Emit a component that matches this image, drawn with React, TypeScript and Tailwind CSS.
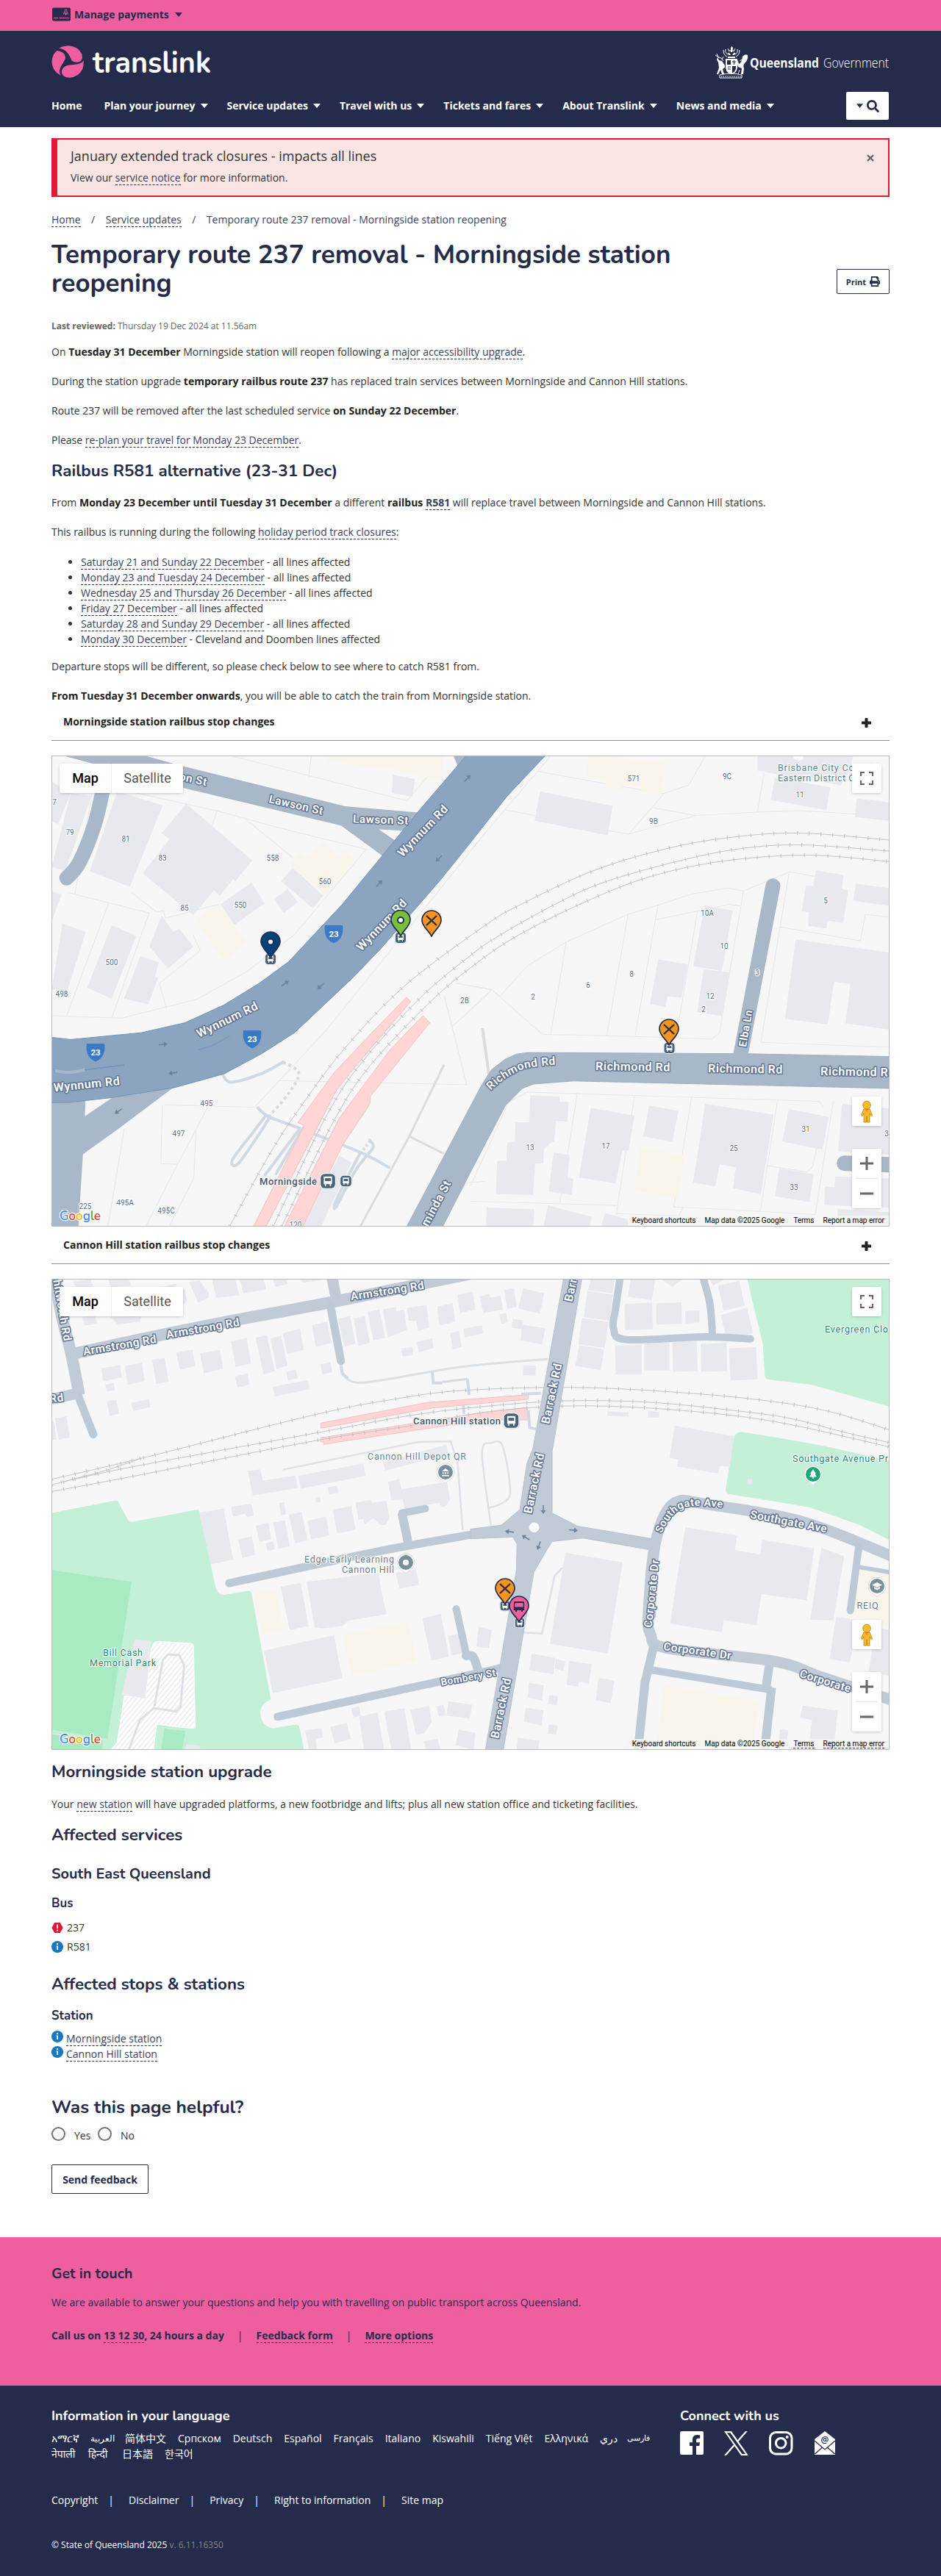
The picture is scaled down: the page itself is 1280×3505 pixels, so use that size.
import React from 'react';
import { FaPrint, FaSearch } from 'react-icons/fa';

type Pt = [number, number];

const NAVY = '#252b4b';
const HEAD = 'font-[Nunito,sans-serif] font-bold text-[#252b4b]';

/* ---------- shared bits ---------- */

const Caret = ({ className = '' }: { className?: string }) => (
  <svg className={className} width="10" height="6" viewBox="0 0 10 6" fill="currentColor">
    <path d="M0 0H10L5 6Z" />
  </svg>
);

const A = ({ children }: { children: React.ReactNode }) => (
  <a href="#" className="border-b border-dashed border-[#252b4b] text-[#3a4160]">
    {children}
  </a>
);

const B = ({ children }: { children: React.ReactNode }) => <strong className="font-bold text-[#222]">{children}</strong>;

const InfoIcon = () => (
  <svg width="16" height="16" viewBox="0 0 16 16">
    <circle cx="8" cy="8" r="8" fill="#1878c0" />
    <circle cx="8" cy="4.2" r="1.1" fill="#fff" />
    <path d="M6.6 6.4H8.9V12H7.2V7.6H6.6Z" fill="#fff" />
  </svg>
);

const AlertIcon = () => (
  <svg width="16" height="14" viewBox="0 0 16 14">
    <path d="M4.2 0H11.8L15.6 7L11.8 14H4.2L.4 7Z" fill="#e31836" />
    <path d="M7 2.4H9L8.7 8.2H7.3Z" fill="#fff" />
    <circle cx="8" cy="10.6" r="1.1" fill="#fff" />
  </svg>
);

/* ---------- map drawing helpers ---------- */

const pts = (s: string): Pt[] =>
  s.trim().split(/\s+/).map((p) => p.split(',').map(Number) as Pt);

/** Smooth open curve through a list of points. */
function curve(s: string) {
  const p = pts(s);
  let d = `M${p[0][0]} ${p[0][1]}`;
  for (let i = 0; i < p.length - 1; i++) {
    const a = p[i - 1] ?? p[i];
    const b = p[i];
    const c = p[i + 1];
    const e = p[i + 2] ?? c;
    d += `C${b[0] + (c[0] - a[0]) / 6} ${b[1] + (c[1] - a[1]) / 6} ${c[0] - (e[0] - b[0]) / 6} ${c[1] - (e[1] - b[1]) / 6} ${c[0]} ${c[1]}`;
  }
  return d;
}

const Poly = ({ p, f = '#e8e9ef', s }: { p: string; f?: string; s?: string }) => (
  <polygon points={p} fill={f} stroke={s ?? 'none'} vectorEffect="non-scaling-stroke" strokeLinejoin="round" />
);

const Line = ({ p, c = '#e4e4e6', w = 1.3, dash, round }: { p: string; c?: string; w?: number; dash?: string; round?: boolean }) => (
  <path
    d={curve(p)}
    fill="none"
    stroke={c}
    strokeWidth={w}
    strokeDasharray={dash}
    strokeLinecap={round ? 'round' : 'butt'}
    strokeLinejoin="round"
    vectorEffect="non-scaling-stroke"
  />
);

const Seg = ({ p, c = '#e6e6e8', w = 1 }: { p: string; c?: string; w?: number }) => (
  <polyline points={p} fill="none" stroke={c} strokeWidth={w} vectorEffect="non-scaling-stroke" />
);

const Rail = ({ p }: { p: string }) => (
  <>
    <Line p={p} c="#c3c4c9" w={1} />
    <Line p={p} c="#c3c4c9" w={5} dash="1.2 14.8" />
  </>
);

const Ramp = ({ p, w = 4 }: { p: string; w?: number }) => <Line p={p} c="#d0dae4" w={w} round />;

const Road = ({ x, y, r = 0, t, size = 15.2 }: { x: number; y: number; r?: number; t: string; size?: number }) => (
  <text
    transform={`translate(${x} ${y}) rotate(${r})`}
    textAnchor="middle"
    dy=".36em"
    fontSize={size}
    fontWeight="600"
    letterSpacing=".55"
    fill="#fff"
    stroke="#5f7391"
    strokeWidth="3"
    strokeLinejoin="round"
    paintOrder="stroke"
  >
    {t}
  </text>
);

const Tag = ({ x, y, t, c = '#5c7089', size = 10, anchor = 'middle', w = 400, len }: { x: number; y: number; t: string; c?: string; size?: number; anchor?: 'start' | 'middle' | 'end'; w?: number; len?: number }) => (
  <text x={x} y={y} dy=".36em" textAnchor={anchor} fontSize={size} fontWeight={w} fill={c} stroke="#fff" strokeWidth="2.4" strokeLinejoin="round" paintOrder="stroke" textLength={len}>
    {t}
  </text>
);

const Arrow = ({ x, y, r }: { x: number; y: number; r: number }) => (
  <path transform={`translate(${x} ${y}) rotate(${r})`} d="M-6 -.8H1V-3.6L6 0L1 3.6V.8H-6Z" fill="#6d829b" />
);

const Shield = ({ x, y }: { x: number; y: number }) => (
  <g transform={`translate(${x} ${y})`}>
    <path d="M-12 -12H12C13.5 -2 11 8 0 12.500C-11 8 -13.500 -2 -12 -12Z" fill="#3a78c8" />
    <text textAnchor="middle" y="3.500" fontSize="11.500" fontWeight="700" fill="#fff">23</text>
  </g>
);

const Stop = ({ x, y, s = 1 }: { x: number; y: number; s?: number }) => (
  <g transform={`translate(${x} ${y}) scale(${s})`}>
    <rect x="-8" y="-8" width="16" height="16" rx="5" fill="#fff" stroke="#d5d9df" strokeWidth=".5" />
    <rect x="-7" y="-7" width="14" height="14" rx="4" fill="#48647a" />
    <path d="M-4 -4.500H4V3H3V5H1.800V3H-1.800V5H-3V3H-4Z" fill="#fff" />
    <path d="M-2.800 -2.800H2.800V0H-2.800Z" fill="#48647a" />
  </g>
);

const Pin = ({ x, y, f, kind }: { x: number; y: number; f: string; kind: 'dot' | 'cross' | 'bus' }) => (
  <g transform={`translate(${x} ${y})`} stroke={NAVY}>
    <path d="M0 0C-3.500 -8 -13 -13 -13 -22A13 13 0 0 1 13 -22C13 -13 3.500 -8 0 0Z" fill={f} strokeWidth="1.700" strokeLinejoin="round" />
    {kind === 'dot' && <circle cy="-21.500" r="4" fill="#fff" strokeWidth="2" />}
    {kind === 'cross' && <path d="M-7 -28L7 -15M7 -28L-7 -15" strokeWidth="2.300" fill="none" />}
    {kind === 'bus' && (
      <g fill={NAVY} stroke="none">
        <path d="M-6 -28H6C7 -28 7 -27 7.200 -25V-16H5V-14H3V-16H-3V-14H-5V-16H-7.200V-25C-7 -27 -7 -28 -6 -28Z" />
        <path d="M-5.500 -26H5.500L6 -20.500H-6Z" fill={f} />
      </g>
    )}
  </g>
);

const Poi = ({ x, y, f, children }: { x: number; y: number; f: string; children?: React.ReactNode }) => (
  <g transform={`translate(${x} ${y})`}>
    <path d="M0 15C-3 11 -12 9 -12 0A12 12 0 0 1 12 0C12 9 3 11 0 15Z" fill="#fff" stroke="#d0d4da" strokeWidth=".8" />
    <circle r="10" fill={f} />
    {children}
  </g>
);

/* ---------- map 1: Morningside ---------- */

function MorningsideMap() {
  return (
    <svg className="block h-full w-full font-[Roboto,sans-serif]" viewBox="0 0 1138 639">
      <rect width="1138" height="639" fill="#f7f7f7" />
      <g transform="translate(-11 -9) scale(.38265 .42092)">
        {/* parcel boundaries */}
        <Seg p="85,462 230,495 373,528 240,868" />
        <Seg p="230,495 80,860" />
        <Seg p="27,860 275,868 540,808 720,718 890,598 1145,322 845,255 615,198 230,120" />
        <Seg p="615,198 590,265" /><Seg p="710,220 885,350" />
        <Seg p="430,1148 748,1156 1000,910 1568,270" /><Seg p="830,1070 1502,1083 1450,895 1422,795" />
        <Seg p="435,837 410,755 555,650 530,600" /><Seg p="170,140 110,465" />
        <Seg p="308,460 400,525 425,520 430,545 620,500" /><Seg p="420,1148 415,1338 475,1340 585,1150" />
        <Seg p="285,1225 227,1540" /><Seg p="475,1340 362,1540" /><Seg p="540,1230 532,1385 445,1540" />
        <Seg p="665,20 1290,165 1360,90" /><Seg p="940,90 950,20" /><Seg p="1405,1540 1502,1400 1568,1395" />
        <Seg p="1450,895 1568,800 1590,775 1465,755" />
        {/* buildings */}
        <Poly p="260,135 422,180 305,443 162,393" />
        <Poly p="27,105 95,140 50,240 27,232" /><Poly p="95,140 168,150 75,393 27,378" />
        <Poly p="505,175 740,358 680,425 672,418 625,472 604,455 530,535 350,400 445,290 418,270" />
        <Poly p="737,430 784,497 677,566 627,500" />
        <Poly p="884,382 992,472 955,513 843,425" /><Poly p="866,450 901,493 852,528 817,483" />
        <Poly p="65,562 148,590 80,785 27,775" /><Poly p="240,568 328,602 240,805 153,770" />
        <Poly p="418,537 460,590 480,578 531,637 440,708 374,636" />
        <Poly p="342,667 408,688 395,733 405,738 370,824 284,805" /><Poly p="27,458 62,468 27,555" />
        <Poly p="1240,82 1318,95 1310,152 1236,140" />
        <Poly p="1050,1312 1092,1335 985,1540 920,1540" /><Poly p="1160,1145 1125,1195 1115,1185" />
        <Poly p="1010,20 1420,20 1408,97 1245,65 1008,38" f="#faf5ea" />
        <Poly p="990,298 1050,355 1066,325 1105,355 1000,470 875,370 910,338 940,352" f="#faf5ea" />
        <Poly p="622,502 718,625 636,680 540,550" f="#faf5ea" />
        {/* right side parcels */}
        <g transform="translate(1516 0)">
          <Seg p="240,70 478,110 685,142 775,115 835,20" /><Seg p="125,195 228,213" /><Seg p="285,20 0,325" />
          <Seg p="490,262 562,273 690,140" /><Seg p="562,273 800,213 650,188" />
          <Seg p="800,213 1020,202 1170,197 1366,208" /><Seg p="1020,202 1043,75" />
          <Seg p="0,840 75,776 105,797 200,700 340,622 560,532 666,503 785,467 915,447 970,457 1133,395 1225,410" />
          <Seg p="0,763 75,776 255,920 700,930 858,936 885,915 970,457" />
          <Seg p="340,622 285,920" /><Seg p="560,532 484,925" /><Seg p="666,503 585,925" />
          <Seg p="658,550 920,500 958,505" /><Seg p="807,520 740,880" />
          <Seg p="1133,395 1032,946 1488,962" /><Seg p="1100,573 1386,618 1403,532 1488,542" />
          <Seg p="0,1410 135,1140 200,1107 1240,1137 1253,1153" />
          <Seg p="380,1108 317,1465" /><Seg p="583,1118 518,1500 740,1507 755,1480" />
          <Seg p="786,1122 722,1478 980,1490 1225,1503" /><Seg p="1092,1130 1030,1490" /><Seg p="1290,1135 1225,1503" />
          <Seg p="0,1460 518,1473" /><Seg p="1055,1345 1195,1365 1215,1350 1230,1290" />
          <Poly p="247,135 505,182 488,277 228,230" />
          <Poly p="1020,20 1360,20 1350,60 1315,115 1020,68" /><Poly p="1082,90 1278,122 1265,195 1067,163" />
          <Poly p="1373,158 1488,170 1488,230 1366,218" />
          <Poly p="418,20 695,40 675,147 607,135 609,118 540,115 538,128 478,122 480,98 411,85" f="#faf5ea" />
          <Poly p="1228,390 1326,405 1320,450 1342,455 1325,560 1268,553 1265,578 1200,570 1203,525 1177,522 1192,440 1218,440" />
          <Poly p="1370,433 1488,448 1488,505 1360,488" />
          <Poly p="1155,614 1488,655 1488,905 1333,885 1350,757 1292,750 1270,888 1118,870" />
          <Poly p="832,503 932,520 893,715 791,700" /><Poly p="828,710 920,720 893,862 806,848" />
          <Poly p="667,678 773,695 750,802 700,797 693,832 638,822" />
          <Poly p="212,1117 316,1122 316,1137 349,1140 344,1203 304,1200 297,1268 285,1270 260,1293 258,1337 230,1338 222,1440 90,1436 95,1330 127,1328 130,1270 157,1268 160,1205 208,1205" />
          <Poly p="427,1158 582,1183 562,1297 540,1295 515,1402 385,1383" />
          <Poly p="635,1150 739,1168 717,1267 614,1250" />
          <Poly p="295,1302 352,1310 345,1383 365,1387 360,1440 278,1428" />
          <Poly p="604,1288 760,1310 737,1450 580,1424" f="#faf5ea" />
          <Poly p="834,1145 1077,1180 1032,1437 933,1418 943,1350 885,1340 870,1412 791,1400" />
          <Poly p="1131,1162 1273,1187 1251,1293 1108,1267" /><Poly p="1097,1353 1220,1372 1205,1463 1082,1443" />
          <Poly p="1320,1145 1488,1160 1488,1310 1307,1298" /><Poly p="1297,1380 1488,1385 1488,1480 1257,1472 1260,1412 1294,1415" />
          <Poly p="57,1480 228,1486 222,1540 55,1540" /><Poly p="275,1473 430,1510 425,1540 260,1540" /><Poly p="478,1498 565,1520 560,1540 465,1540" />
          <Poly p="1305,1485 1488,1495 1488,1540 1303,1540" />
        </g>
        {/* pedestrian paths */}
        <Ramp p="635,1050 665,1075 770,1048 850,1010" />
        <Line p="850,1010 905,1045 870,1110 800,1185" c="#d9d9db" w={4} dash="4 4" />
        <Ramp p="760,1158 800,1187 920,1228 1125,1302 1225,1350" />
        <Ramp p="785,1187 740,1240 670,1325 690,1338 770,1235 800,1190" />
        <Ramp p="905,1230 785,1375" /><Ramp p="930,1210 890,1270 825,1370" />
        <Ramp p="1158,1262 1170,1285 1140,1320 1100,1370 1040,1475 1035,1465 1080,1380 1125,1302" />
        <Line p="1158,1265 1130,1300" c="#d9d9db" w={4} dash="3 3" />
        <Seg p="1422,1018 1298,1250 1125,1540" c="#dcdcde" w={3} /><Seg p="1298,1250 1422,1306" c="#dcdcde" w={3} />
        <Seg p="1558,900 1582,1055" c="#dcdcde" w={4} />
        {/* platforms and tracks */}
        <Poly p="1288,800 1303,815 1110,1020 1040,1100 790,1540 745,1540 925,1215 902,1205 1030,1045 1160,920" f="#ffd5d6" s="#f8bfc1" />
        <Poly p="1347,860 1371,883 1160,1120 1158,1145 1060,1280 920,1540 855,1540 1050,1190 1140,1080 1230,970" f="#ffd5d6" s="#f8bfc1" />
        <Rail p="660,1540 800,1310 900,1170 1060,975 1280,765 1568,568 1696,500 1956,390 2236,315 2476,280 2696,270 3004,292" />
        <Rail p="815,1540 1000,1190 1130,1010 1340,800 1516,665 1616,602 1816,500 1986,430 2246,362 2476,320 2696,308 3004,328" />
        <Rail p="845,1540 1030,1200 1160,1020 1370,818 1516,705 1676,605 1916,495 2156,410 2416,360 2716,341 3004,362" />
        {/* local roads */}
        <Poly p="27,1130 147,1130 145,1185 250,1120 470,1085 265,1225 138,1308 122,1540 27,1540" f="#a9b8c9" />
        <Poly p="70,20 360,20 500,55 1070,183 1330,203 1275,262 1190,258 1250,295 1205,345 1055,245 500,125" f="#a9b8c9" />
        <Line p="210,125 180,240 125,365 80,415" c="#a9b8c9" w={20} round />
        <Poly p="1455,20 1510,20 1470,52" f="#a9b8c9" />
        <Poly p="3005,992 2500,983 1720,979 1680,984 1640,1000 1590,1035 1555,1085 1290,1540 1418,1540 1516,1365 1640,1150 1700,1095 1740,1081 1880,1071 3005,1095" f="#a9b8c9" s="#9fb0c3" />
        <Line p="2591,440 2476,985" c="#a9b8c9" w={20} round />
        <Line p="2845,1337 3005,1342" c="#a9b8c9" w={21} round />
        {/* highway */}
        <Poly p="27,930 95,937 345,915 500,883 640,825 765,755 870,685 1060,500 1200,345 1330,200 1500,20 1781,20 1646,150 1516,300 1410,420 1305,530 1195,645 1100,735 890,915 775,982 640,1048 465,1092 240,1125 90,1140 27,1141" f="#8ba4c0" s="#6f94bd" />
        <Line p="40,1038 90,1043 145,1035" c="#a9b8c9" w={4} /><Line p="145,1035 210,1028 285,1020" c="#6f94bd" w={1.5} />
        <Line p="550,970 600,955 660,925" c="#7797bb" w={1.5} />
      </g>
      <Arrow x={151} y={392} r={-5} /><Arrow x={164} y={431} r={172} /><Arrow x={90} y={483} r={145} />
      <Arrow x={317} y={309} r={-35} /><Arrow x={365} y={313} r={138} /><Arrow x={445} y={173} r={-47} />
      <Arrow x={526} y={139} r={135} /><Arrow x={565} y={30} r={-47} />
      <Road x={192} y={31} r={12} t="on St" /><Road x={332} y={66} r={13} t="Lawson St" /><Road x={447} y={86} r={2} t="Lawson St" />
      <Road x={504} y={101} r={-46} t="Wynnum Rd" size={16} /><Road x={448} y={229} r={-46} t="Wynnum Rd" size={16} />
      <Road x={238} y={358} r={-26} t="Wynnum Rd" size={16} /><Road x={47} y={446} r={-6} t="Wynnum Rd" size={16} />
      <path id="richmondBend" d="M587 465Q611 437 640 426Q665 419 710 419" fill="none" />
      <text fontSize="15.500" fontWeight="600" letterSpacing=".5" fill="#fff" stroke="#5f7391" strokeWidth="3" strokeLinejoin="round" paintOrder="stroke">
        <textPath href="#richmondBend" startOffset="14">Richmond Rd</textPath>
      </text>
      <Road x={790} y={422} r={1} t="Richmond Rd" size={16} /><Road x={943} y={425} r={1} t="Richmond Rd" size={16} /><Road x={1096} y={429} r={1} t="Richmond Rd" size={16} />
      <Road x={943} y={370} r={-80} t="Elba Ln" size={14.5} /><Road x={522} y={608} r={-62} t="minda St" size={16} />
      <Shield x={59} y={403} /><Shield x={272} y={385} /><Shield x={383} y={242} />
      {([
        [3, 62, '7'], [24, 103, '79'], [100, 112, '81'], [150, 138, '83'], [300, 138, '558'], [371, 170, '560'], [180, 206, '85'], [256, 202, '550'],
        [81, 280, '500'], [13, 323, '498'], [210, 472, '495'], [172, 513, '497'], [99, 607, '495A'], [155, 618, '495C'], [45, 612, '225'], [331, 637, '120'],
        [561, 332, '2B'], [791, 30, '571'], [918, 27, '9C'], [818, 88, '9B'], [1017, 52, '11'], [1052, 196, '5'], [891, 213, '10A'], [914, 258, '10'],
        [654, 327, '2'], [729, 311, '6'], [788, 296, '8'], [895, 326, '12'], [886, 344, '2'], [959, 294, '3'], [650, 532, '13'], [753, 530, '17'],
        [927, 533, '25'], [1025, 507, '31'], [1009, 586, '33'], [1135, 513, '3'],
      ] as [number, number, string][]).map(([x, y, t], i) => <Tag key={i} x={x} y={y} t={t} />)}
      <path d="M1008 0A7 6 0 0 0 1022 0Z" fill="#fff" />
      <Tag x={987} y={15} t="Brisbane City Council" anchor="start" size={12.5} c="#5e7d8c" len={134} />
      <Tag x={987} y={29} t="Eastern District Office" anchor="start" size={12.5} c="#5e7d8c" len={130} />
      <Tag x={282} y={578} t="Morningside" anchor="start" size={13} w={500} c="#3f5468" len={78} />
      <Stop x={375} y={578} s={1.4} /><Stop x={399.500} y={578} s={1.050} />
      <Stop x={297} y={276} s={1} /><Stop x={474} y={247} s={1} /><Stop x={839.500} y={397} s={1} />
      <Pin x={297} y={274} f="#00427c" kind="dot" /><Pin x={474} y={244.500} f="#79bf3f" kind="dot" />
      <Pin x={516} y={245} f="#f7931f" kind="cross" /><Pin x={839} y={393} f="#f7931f" kind="cross" />
    </svg>
  );
}

/* ---------- map 2: Cannon Hill ---------- */

const MAJOR = '#c1cbd8';
const MINOR = '#bccad8';

function CannonHillMap() {
  return (
    <svg className="block h-full w-full font-[Roboto,sans-serif]" viewBox="0 0 1138 639">
      <defs>
        <pattern id="hatch" width="5" height="5" patternUnits="userSpaceOnUse" patternTransform="rotate(-45) scale(2.4)">
          <rect width="5" height="5" fill="#fff" />
          <path d="M0 2.500H5" stroke="#e4e4ea" strokeWidth="1" />
        </pattern>
      </defs>
      <rect width="1138" height="639" fill="#f7f7f7" />
      <g transform="translate(-11 -71) scale(.38265 .46556)">
        {/* parks */}
        <path d="M27 835L255 798Q262 798 266 806L300 858L312 861L545 825Q551 825 553 832L605 1035Q612 1075 640 1074L725 1062Q735 1062 738 1072L806 1380Q770 1390 768 1420Q775 1462 815 1464L895 1453Q905 1453 908 1462L925 1530H27Z" fill="#c3f0d6" />
        <Poly p="27,1002 311,1036 225,1495 27,1468" f="#a8eac2" /><Poly p="427,1466 502,1472 490,1530 415,1530" f="#a8eac2" /><Poly p="27,1482 210,1500 205,1530 27,1530" f="#a8eac2" />
        <path d="M380 1235Q385 1212 405 1210L520 1216Q530 1216 531 1226L537 1455Q537 1464 527 1464L400 1452L388 1530H235L260 1505L285 1370H360Z" fill="url(#hatch)" stroke="#fff" strokeWidth="3" />
        <Seg p="300,1530 340,1440 390,1405 470,1415 485,1400 498,1280 480,1250 440,1248 422,1265 392,1400" c="#dddfe6" w={3} />
        <Poly p="322,1204 381,1210 360,1377 276,1366" /><Poly p="505,1510 557,1515 550,1530 500,1530" />
        <path d="M2500 152L2522 230L2555 340L2562 435Q2565 445 2580 445L2730 460L3005 524V152Z" fill="#c3f0d6" />
        <path d="M2452 612Q2460 598 2480 598L2610 615L2780 640L3005 682V914L2900 870L2720 818L2440 780Q2420 778 2423 765Z" fill="#c3f0d6" />
        {/* buildings: west */}
        {[
          '105,158 165,152 175,172 115,182', '230,152 300,152 312,170 235,175', '400,178 470,165 468,190 500,180 508,215 495,225', '515,160 552,155 586,192 584,205 548,220',
          '597,152 680,152 693,198 612,206', '695,152 780,152 790,182 708,192', '815,152 860,152 866,165 822,174', '915,152 1000,152 920,161',
          '135,262 178,250 188,282 145,287', '235,262 345,258 342,275 262,284', '203,412 270,403 277,438 210,451', '286,405 347,395 357,449 297,460',
          '384,387 428,381 443,450 399,458', '470,367 527,357 537,405 483,416', '554,368 625,358 636,413 568,427', '664,333 720,323 736,398 681,408',
          '752,322 792,316 820,420 780,430', '805,325 843,317 865,404 826,414', '848,310 910,296 923,358 865,370', '952,286 1006,275 1021,338 966,349',
          '1045,267 1088,260 1107,340 1067,349', '1100,267 1140,260 1158,337 1117,347', '1150,247 1192,240 1212,323 1170,330', '1204,240 1250,233 1253,246 1280,240 1288,300 1222,322',
          '1290,235 1360,227 1369,292 1330,304 1322,274 1296,272', '1397,232 1452,222 1461,276 1405,287', '1470,197 1522,188 1531,240 1478,250', '1325,335 1380,324 1384,352 1333,365',
          '1443,309 1475,303 1484,349 1453,357', '1490,296 1555,287 1559,310 1496,321', '1268,354 1310,350 1311,373 1275,377', '217,459 248,455 252,475 223,479',
          '222,508 256,504 266,545 233,551', '310,513 373,502 377,525 317,537', '38,558 79,552 91,614 53,621', '27,565 36,570 43,620 27,622',
          '860,422 895,416 902,441 867,447', '678,436 724,427 730,459 688,468', '982,401 1018,393 1024,423 990,430', '812,466 938,446 943,473 820,494',
          '724,712 768,707 778,740 893,725 902,762 742,784', '904,726 1135,690 1142,726 912,764', '1205,686 1430,635 1437,662 1212,711', '1222,744 1262,735 1270,765 1432,744 1443,795 1428,815 1412,818 1405,805 1282,822 1275,795 1235,797',
          '664,817 738,808 745,843 722,847 715,836 672,845', '835,806 853,803 860,838 843,841', '1008,760 1042,755 1047,776 1013,780', '963,790 980,787 984,802 968,804',
          '551,834 638,822 672,971 592,985', '752,872 797,863 807,911 766,919', '814,862 856,856 873,931 834,940', '870,840 915,832 937,915 892,923', '937,857 1003,846 1013,901 948,912',
          '1026,825 1092,814 1107,884 1041,894', '1107,804 1160,797 1165,805 1217,799 1228,850 1212,870 1195,870 1170,850 1140,867 1135,853 1118,855', '690,911 739,903 750,957 704,966', '787,923 813,918 821,940 794,945',
          '841,1050 912,1039 940,1165 873,1177', '933,1036 1190,1010 1197,1055 1217,1130 1080,1150 1060,1165 985,1172 962,1168', '1250,1010 1322,1000 1332,1045 1263,1055',
          '782,1237 1030,1192 1060,1318 813,1361', '1344,1142 1410,1130 1439,1255 1377,1266', '1436,1194 1494,1185 1510,1241 1448,1251', '1545,1168 1568,1170 1568,1230 1538,1225',
          '928,1470 987,1464 992,1490 965,1495 970,1530 942,1530', '1017,1460 1076,1448 1090,1496 1033,1508', '1092,1405 1120,1400 1126,1428 1100,1432', '1120,1430 1185,1418 1210,1530 1137,1530', '1210,1415 1280,1405 1305,1530 1235,1530',
          '1303,1410 1368,1399 1378,1445 1350,1480 1322,1483', '1350,1502 1398,1494 1410,1530 1360,1530', '1395,1400 1420,1395 1429,1425 1403,1430', '1437,1385 1521,1395 1513,1436 1430,1427', '1473,1468 1533,1477 1522,1525 1463,1514',
        ].map((p, i) => <Poly key={i} p={p} />)}
        <Poly p="746,1070 822,1058 852,1178 775,1190" f="#faf5ea" /><Poly p="1062,1190 1295,1153 1322,1268 1093,1310" f="#faf5ea" />
        {/* buildings: east */}
        <g transform="translate(1516 0)">
          {[
            '0,190 8,190 17,240 0,245', '33,202 65,195 72,205 107,200 115,240 45,250', '119,183 154,178 164,232 130,238', '187,179 261,192 247,252 169,238', '102,254 127,250 133,277 110,282', '150,267 187,272 184,298 145,293', '184,284 266,295 254,342 178,330', '0,292 40,287 44,308 0,318',
            '188,403 232,405 230,434 186,432', '428,152 512,152 505,192 417,184', '415,186 507,197 495,273 403,262', '396,265 490,276 477,353 383,342', '386,345 475,356 463,418 373,405', '568,152 657,152 645,213 560,203', '548,224 646,220 648,298 550,300', '660,222 750,219 752,282 660,284', '763,245 813,242 814,278 764,281', '680,152 750,152 718,174', '850,152 905,152 862,170', '880,171 955,156 975,230 900,243', '890,256 982,235 1004,308 928,328 915,318 908,322', '514,346 608,343 608,430 516,430', '617,340 707,336 707,418 617,418', '717,335 804,331 807,420 720,422', '818,341 910,337 912,420 820,422', '918,354 1015,350 1020,444 924,448',
            '486,538 562,541 562,553 486,551', '631,536 670,539 670,556 630,555', '725,580 938,610 921,700 887,697 880,719 734,699 737,679 707,673', '985,735 1002,736 1000,752 983,750',
            '337,951 541,979 488,1246 282,1217', '763,877 948,900 940,943 1030,957 1036,913 1222,938 1195,1090 1034,1072 1016,1163 900,1148 893,1183 709,1158', '1247,936 1328,962 1289,1148 1207,1147', '1300,1138 1378,1148 1348,1271 1276,1262', '1440,1170 1488,1175 1488,1310 1415,1300',
            '30,1168 75,1176 66,1230 21,1222', '217,1246 300,1258 295,1306 208,1294', '303,1262 337,1268 331,1297 300,1290', '350,1267 431,1277 420,1333 385,1328 382,1342 342,1337', '208,1331 260,1338 254,1382 204,1374', '280,1367 310,1371 306,1397 276,1392', '455,1317 511,1324 498,1390 445,1382', '196,1404 259,1412 252,1455 190,1445', '278,1452 309,1457 305,1482 275,1479', '168,1492 245,1500 240,1530 163,1530', '1180,1397 1305,1413 1290,1530 1200,1530 1214,1440 1172,1433', '1100,1466 1130,1470 1120,1530 1093,1530', '0,1480 17,1478 12,1525 0,1525',
          ].map((p, i) => <Poly key={i} p={p} />)}
          <Poly p="690,1338 1028,1385 1000,1530 658,1530" f="#faf5ea" /><Poly p="1380,1000 1488,1015 1488,1165 1355,1130" f="#faf5ea" />
        </g>
        {/* small paths */}
        <Line p="1057,400 1060,425 1100,452 1200,447 1480,408 1790,385" c="#dcdfe4" w={3} />
        <Ramp p="1055,395 1060,425 1078,440" />
        <Seg p="1380,422 1383,455 1415,455" c="#d0dae4" w={4} /><Seg p="1415,452 1505,443" c="#d9d9db" w={3} /><Seg p="1505,443 1511,490" c="#d0dae4" w={4} /><Seg p="1490,510 1492,545" c="#d0dae4" w={4} />
        <Seg p="850,708 1330,627 1445,625 1470,690 1488,885" c="#dfe1e6" w={2.5} />
        <Line p="1588,870 1557,660 1590,630 1630,640 1657,770 1630,805 1582,820" c="#dfe1e6" w={2.5} />
        <Seg p="1842,995 1815,1018 1770,1187 1700,1184" c="#dcdfe4" w={2.5} />
        {/* roads */}
        <Line p="35,130 60,250 95,365 125,490" c={MAJOR} w={16} />
        <Line p="120,490 175,605" c={MINOR} w={11} round />
        <Line p="27,502 120,485" c={MAJOR} w={15} />
        <Line p="100,370 560,290 1030,217 1520,135" c={MAJOR} w={16} />
        <Line p="1022,140 1040,215" c={MAJOR} w={15} /><Line p="1018,230 1055,390" c={MINOR} w={11} round />
        <Line p="658,1040 1200,945 1590,888 1680,872" c={MINOR} w={11} round />
        <Seg p="1295,925 1272,835" c={MINOR} w={12} /><Line p="1272,835 1355,822" c={MINOR} w={10} round />
        <Line p="830,1430 1250,1355 1560,1300 1620,1288" c={MINOR} w={11} round />
        <Line p="1465,1115 1500,1245" c={MINOR} w={10} round /><Line p="1500,1252 1525,1255 1545,1300" c={MINOR} w={12} round />
        {/* platforms and tracks */}
        <Poly p="984,572 1360,512 1721,489 1721,502 1380,528 984,587" f="#ffd5d6" s="#f8bfc1" /><Poly p="984,615 1568,540 1715,527 1721,537 1721,563 1568,562 994,634 994,627 984,627" f="#ffd5d6" s="#f8bfc1" />
        <Rail p="27,736 345,675 960,548 1260,500 1500,476 1900,468 2300,485 2600,510 2800,540 3005,592" />
        <Rail p="27,752 300,702 960,602 1300,550 1568,523 1850,507 2150,511 2450,535 2650,558 2850,600 3005,629" />
        <Rail p="27,772 300,730 960,624 1300,580 1568,540 1850,522 2150,528 2450,550 2650,576 2850,612 3005,642" />
        <Rail p="60,745 220,710 345,675" />
        {/* east roads */}
        <g transform="translate(1516 0)">
          <Line p="535,130 515,240 508,295 555,328 830,320 995,326" c={MINOR} w={10} round />
          <Line p="820,130 850,220 860,315" c={MINOR} w={10} round />
          <Poly p="330,152 395,152 290,655 290,835 380,873 645,910 635,942 400,908 290,918 262,955 225,1008 116,1530 52,1530 163,1000 165,925 150,905 0,910 0,882 110,870 175,825 200,690 222,645" f={MAJOR} s="#b6c3d2" />
          <ellipse cx="226" cy="877" rx="18" ry="14.500" fill="#fff" />
          <Line p="640,1140 638,1050 655,930 690,840 740,800 830,808 1180,860 1500,962" c={MAJOR} w={15} />
          <Line p="655,925 632,1120 640,1190 700,1230 1080,1268 1250,1315 1500,1382" c={MAJOR} w={15} />
          <Seg p="655,1210 620,1330 595,1530" c={MINOR} w={12} /><Seg p="640,1293 1070,1352" c={MINOR} w={10} />
          <Seg p="1062,1280 1050,1345" c={MINOR} w={12} /><Seg p="1070,1345 1045,1530" c={MINOR} w={12} />
          <Line p="1380,935 1350,1120" c={MINOR} w={10} round /><Seg p="1375,992 1490,1008" c={MINOR} w={6} />
          <Seg p="205,535 210,585 235,590" c="#d0dae4" w={4} /><Seg p="180,487 250,485" c="#d0dae4" w={4} />
        </g>
      </g>
      <Arrow x={668} y={313} r={90} /><Arrow x={622} y={343} r={-172} /><Arrow x={644} y={351} r={-150} /><Arrow x={662} y={362} r={110} /><Arrow x={709} y={341} r={5} />
      <Road x={14} y={42} r={80} t="hitworth Rd" /><Road x={6} y={161} r={-7} t="Rd" />
      <Road x={92} y={89} r={-10} t="Armstrong Rd" /><Road x={205} y={66} r={-10} t="Armstrong Rd" /><Road x={456} y={15} r={-9} t="Armstrong Rd" />
      <Road x={705} y={14} r={-78} t="Barr" size={16} /><Road x={679} y={155} r={-78} t="Barrack Rd" size={16} /><Road x={655} y={277} r={-78} t="Barrack Rd" size={16} /><Road x={610} y={583} r={-78} t="Barrack Rd" size={16} />
      <Road x={566} y={541} r={-10} t="Bombery St" size={13.5} />
      <path id="southgateBend" d="M828 348Q841 317 858 311Q880 303 940 316" fill="none" />
      <text fontSize="14.500" fontWeight="600" letterSpacing=".5" fill="#fff" stroke="#5f7391" strokeWidth="3" strokeLinejoin="round" paintOrder="stroke">
        <textPath href="#southgateBend" startOffset="2">Southgate Ave</textPath>
      </text>
      <Road x={1002} y={329} r={11} t="Southgate Ave" /><Road x={815} y={427} r={-84} t="Corporate Dr" /><Road x={878} y={505} r={8} t="Corporate Dr" /><Road x={1052} y={546} r={17} t="Corporate" />
      <Tag x={491} y={192} t="Cannon Hill station" anchor="start" size={13} w={500} c="#3f5468" len={119} /><Stop x={624.500} y={192} s={1.4} />
      <Tag x={429} y={240} t="Cannon Hill Depot QR" anchor="start" size={12.5} c="#6c7f92" len={134} />
      <Poi x={535} y={262} f="#78909c"><path d="M-5 -1L0 -5L5 -1ZM-5 4H5V5.500H-5ZM-4 0H-2.500V3H-4ZM-.7 0H.7V3H-.7ZM2.500 0H4V3H2.500Z" fill="#fff" /></Poi>
      <Tag x={465} y={380} t="Edge Early Learning" anchor="end" size={12.5} c="#5e7d8c" len={122} /><Tag x={465} y={394} t="Cannon Hill" anchor="end" size={12.5} c="#5e7d8c" len={71} />
      <Poi x={481} y={385} f="#78909c"><circle r="4" fill="#fff" /></Poi>
      <Tag x={96} y={507} t="Bill Cash" size={12.5} c="#198a63" len={54} /><Tag x={96} y={521} t="Memorial Park" size={12.5} c="#198a63" len={90} />
      <Tag x={1051} y={67} t="Evergreen Clo" anchor="start" size={12.5} c="#198a63" len={86} /><Tag x={1007} y={243} t="Southgate Avenue Pr" anchor="start" size={12.5} c="#198a63" len={130} />
      <Poi x={1035} y={265} f="#18a873"><path d="M0 -7L4 -1H2.500L5 3.500H.9V6H-.9V3.500H-5L-2.500 -1H-4Z" fill="#fff" /></Poi>
      <Poi x={1122} y={417} f="#78909c"><path d="M0 -5L7 -1.500L0 2L-7 -1.500ZM-4 1L0 3L4 1V3.500L0 5.500L-4 3.500Z" fill="#fff" /></Poi>
      <Tag x={1109} y={443} t="REIQ" size={12.5} c="#6c7f92" len={29} />
      <Stop x={616} y={444} s={.9} /><Stop x={636} y={467} s={.9} />
      <Pin x={616} y={442} f="#f7931f" kind="cross" /><Pin x={635} y={466} f="#ef5fa0" kind="bus" />
    </svg>
  );
}

/* ---------- map chrome ---------- */

const CTRL = 'absolute rounded-[2px] bg-white shadow-[0_1px_4px_-1px_rgba(0,0,0,0.3)]';

function MapFrame({ children, dashed }: { children: React.ReactNode; dashed?: boolean }) {
  const note = dashed ? 'border-b border-dashed border-[#252b4b]' : '';
  return (
    <div className="relative mt-5 h-[641px] overflow-hidden border border-[#bbb] font-[Roboto,sans-serif]">
      {children}
      <div className={`${CTRL} left-[10px] top-[10px] flex h-10 text-[18px] leading-[40px]`}>
        <div className="w-[70px] text-center font-medium text-black">Map</div>
        <div className="w-[98px] border-l border-[#eee] text-center text-[#565656]">Satellite</div>
      </div>
      <div className={`${CTRL} right-[10px] top-[10px] flex h-10 w-10 items-center justify-center`}>
        <svg width="18" height="18" viewBox="0 0 18 18" fill="#666">
          <path d="M0 0V6H2V2H6V0ZM12 0V2H16V6H18V0ZM0 12V18H6V16H2V12ZM16 12V16H12V18H18V12Z" />
        </svg>
      </div>
      <div className={`${CTRL} bottom-[136px] right-[10px] flex h-10 w-10 items-center justify-center`}>
        <svg width="18" height="31" viewBox="0 0 18 31">
          <path d="M5 12H13L16.500 20.500L14.800 21.500L12.800 17.500L13 30H9.600V22H8.400V30H5L5.200 17.500L3.200 21.500L1.500 20.500Z" fill="#fbbc2c" stroke="#c9901c" strokeWidth="1" />
          <path d="M6 12H12L9 16Z" fill="#f0812a" />
          <circle cx="9" cy="6.500" r="5.300" fill="#fbbc2c" stroke="#c9901c" strokeWidth="1" />
        </svg>
      </div>
      <div className={`${CTRL} bottom-[24px] right-[10px] flex h-[81px] w-10 flex-col items-center justify-between`}>
        <div className="flex h-10 items-center"><svg width="18" height="18" fill="#666"><path d="M7.500 0H10.500V7.500H18V10.500H10.500V18H7.500V10.500H0V7.500H7.500Z" /></svg></div>
        <div className="h-px w-[30px] bg-[#e6e6e6]" />
        <div className="flex h-10 items-center"><svg width="18" height="18" fill="#666"><path d="M0 7.500H18V10.500H0Z" /></svg></div>
      </div>
      <svg className="absolute bottom-0 left-[8px]" width="66" height="26" viewBox="0 0 66 26">
        <text x="2" y="18" fontFamily="Nunito" fontSize="18" fontWeight="600" textLength="56" lengthAdjust="spacingAndGlyphs" stroke="#fff" strokeWidth="2.500" strokeLinejoin="round" paintOrder="stroke">
          <tspan fill="#4285f4">G</tspan><tspan fill="#ea4335">o</tspan><tspan fill="#fbbc04">o</tspan><tspan fill="#4285f4">g</tspan><tspan fill="#34a853">l</tspan><tspan fill="#ea4335">e</tspan>
        </text>
      </svg>
      <div className="absolute bottom-0 right-0 flex h-[14px] bg-[#f5f5f5]/80 text-[10px] leading-[13px] text-black">
        <span className="px-[6px]">Keyboard shortcuts</span>
        <span className="px-[6px]">Map data ©2025 Google</span>
        <span className="px-[6px]"><span className={note}>Terms</span></span>
        <span className="px-[6px]"><span className={note}>Report a map error</span></span>
      </div>
    </div>
  );
}

function StopChanges({ title, dashed, children }: { title: string; dashed?: boolean; children: React.ReactNode }) {
  return (
    <section className="pt-[14px]">
      <button className="flex h-[37px] w-full items-start justify-between border-b border-[#8f9294] pl-4 pr-[25px] text-left font-bold text-[#222]">
        <span>{title}</span>
        <svg className="mt-[6px]" width="13" height="13" viewBox="0 0 13 13" fill="#222"><path d="M5.300 0H7.700Q8.500 0 8.500 .8V4.500H12.200Q13 4.500 13 5.300V7.700Q13 8.500 12.200 8.500H8.500V12.200Q8.500 13 7.700 13H5.300Q4.500 13 4.500 12.200V8.500H.8Q0 8.500 0 7.700V5.300Q0 4.500 .8 4.500H4.500V.8Q4.500 0 5.300 0Z" /></svg>
      </button>
      <MapFrame dashed={dashed}>{children}</MapFrame>
    </section>
  );
}

/* ---------- header ---------- */

const Crest = () => (
  <svg width="45" height="44" viewBox="0 0 45 44" fill="#fff">
    <path d="M14 17H30V29Q29 37 22 38Q15 37 14 29Z" />
    <path d="M16 19H21V25H16ZM23 27H28V30Q27 35 23 36Z" fill={NAVY} />
    <path d="M23 21H28M25.500 19V25M17 28H21M17 31H21" stroke={NAVY} strokeWidth="1.100" />
    <path d="M3 15L5 19L9 20L13 26V29L10 31L12 38H9L7 32L4 38H2L5 29L4 22L2 18Z" />
    <path d="M2 10L4 15L8 16L11 20M0 12L5 15M11 14L9 18" stroke="#fff" fill="none" />
    <path d="M44 12Q40 10 37 14Q36 22 32 24L31 20L29 18V22L31 28L36 30L35 38H38L39 30Q37 25 41 22Q45 17 44 12Z" />
    <path d="M33 20L36 18M33 32L31 38" stroke="#fff" />
    <path d="M17 14H27V16H17ZM18 12Q16 8 19 9L21 12ZM26 12Q29 8 25 9L23 12ZM21 2L22.500 0L24 2L23 8H21Z" />
    <path d="M14 4Q13 9 17 11M30 4Q31 9 27 11M17 3L19 7M27 3L25 7M11 5Q11 12 16 14M33 5Q33 12 28 14M18 6H26" stroke="#fff" strokeWidth="1" fill="none" />
    <path d="M6 39Q22 35 36 39V43H6Z" fill="none" stroke="#fff" strokeWidth="1" />
    <path d="M8 41H35" stroke="#fff" strokeDasharray="1.500 1" />
  </svg>
);

function Header() {
  const items = ['Plan your journey', 'Service updates', 'Travel with us', 'Tickets and fares', 'About Translink', 'News and media'];
  return (
    <>
      <div className="h-[42px] bg-[#ef5fa0]">
        <div className="mx-auto flex w-[1140px] items-center pt-[9px] font-bold leading-[21px] text-[#252b4b]">
          <svg className="ml-[1px] mr-[5px]" width="25" height="19" viewBox="0 0 25 19">
            <rect width="25" height="18" y=".5" rx="2" fill={NAVY} />
            <path d="M2 14.500H8M9.500 14.500H23" stroke="#ef5fa0" />
            <path d="M15.500 9.500Q16 5 18.500 4.500Q21 5 21.500 9.500M17.300 10V7.500Q18.500 5.500 19.700 7.500V10M18.500 8V10.500M16.500 4Q18.500 2 20.500 4" stroke="#ef5fa0" strokeWidth=".9" fill="none" />
          </svg>
          Manage payments
          <Caret className="ml-[8px]" />
        </div>
      </div>
      <header className="h-[131px] bg-[#252b4b] text-white">
        <div className="mx-auto w-[1140px]">
          <div className="flex h-[83px] items-start justify-between pt-5">
            <svg className="overflow-visible" width="222" height="46" viewBox="0 0 222 46">
              <g transform="translate(-70 -62) scale(.40816 .33333)" fill="#ef5fa0">
                <path d="M196 197Q212 186 231 187Q262 191 273 222Q277 245 265 252Q250 257 241 249C234 240 229 200 196 197Z" />
                <path d="M190 207Q216 210 218 233C218 255 188 278 203 308Q173 290 173 250Q174 222 190 207Z" />
                <path d="M279 247C268 268 240 262 225 267Q204 274 206 298Q210 317 232 317Q262 314 275 282Q279 268 279 247Z" />
              </g>
              <text x="56" y="37" fontFamily="Nunito" fontSize="41" fontWeight="700" fill="#fff" textLength="161" lengthAdjust="spacingAndGlyphs">translink</text>
            </svg>
            <div className="flex items-start pt-px">
              <Crest />
              <svg className="overflow-visible" width="192" height="44" viewBox="0 0 192 44">
                <text x="2" y="29" fontFamily="Open Sans" fontSize="17.500" fontWeight="700" fill="#fff" textLength="94" lengthAdjust="spacingAndGlyphs">Queensland</text>
                <text x="102" y="29" fontFamily="Open Sans" fontSize="17.500" fontWeight="300" fill="#fff" textLength="89" lengthAdjust="spacingAndGlyphs">Government</text>
              </svg>
            </div>
          </div>
          <nav className="flex items-start font-bold leading-[21px]">
            <a href="#" className="mr-[30px] pt-[8px]">Home</a>
            {items.map((t) => (
              <a key={t} href="#" className="mr-[26px] flex items-center pt-[8px]">
                {t}
                <Caret className="ml-[7px]" />
              </a>
            ))}
            <button className="ml-auto mr-px flex h-[38px] w-[58px] items-center justify-center gap-[5px] rounded-[2px] bg-white text-[#252b4b]">
              <Caret className="w-[9px]" />
              <FaSearch className="text-[17px]" />
            </button>
          </nav>
        </div>
      </header>
    </>
  );
}

/* ---------- footer ---------- */

const LANGS: [string, string][] = [
  ['አማርኛ', 'w-[37px]'], ['العربية', 'w-[31px] text-[12px]'], ['简体中文', ''], ['Српском', ''], ['Deutsch', ''], ['Español', ''], ['Français', ''],
  ['Italiano', ''], ['Kiswahili', ''], ['Tiếng Việt', ''], ['Ελληνικά', ''], ['دري', 'w-[21px]'], ['فارسی', 'w-[31px] text-[10.5px]'],
];
const LANGS2: [string, string][] = [['नेपाली', 'w-[34px]'], ['हिन्दी', 'w-[30px]'], ['日本語', ''], ['한국어', '']];

function Footer() {
  return (
    <>
      <section className="mt-[59px] h-[202px] bg-[#ef5fa0] pt-[38px] text-[#252b4b]">
        <div className="mx-auto w-[1140px]">
          <h2 className="font-[Nunito,sans-serif] text-[19.6px] font-bold leading-6">Get in touch</h2>
          <p className="mt-4">We are available to answer your questions and help you with travelling on public transport across Queensland.</p>
          <p className="mt-6 flex font-bold">
            <span>Call us on <a className="border-b border-dashed border-[#252b4b]">13 12 30</a>, 24 hours a day</span>
            <span className="mx-[18px] font-normal">|</span>
            <a className="h-[21px] border-b border-dashed border-[#252b4b]">Feedback form</a>
            <span className="mx-[18px] font-normal">|</span>
            <a className="h-[21px] border-b border-dashed border-[#252b4b]">More options</a>
          </p>
        </div>
      </section>
      <footer className="h-[259px] bg-[#252b4b] pt-[30px] text-white">
        <div className="mx-auto w-[1140px]">
          <div className="flex">
            <div className="w-[855px]">
              <h2 className="font-[Nunito,sans-serif] text-[18px] font-bold leading-[22px]">Information in your language</h2>
              <ul className="mt-[9px] flex h-[21px] gap-4 whitespace-nowrap">{LANGS.map(([l, c]) => <li key={l} className={`shrink-0 leading-[21px] ${c}`}>{l}</li>)}</ul>
              <ul className="flex h-[21px] gap-4 whitespace-nowrap">{LANGS2.map(([l, c]) => <li key={l} className={`shrink-0 leading-[21px] ${c}`}>{l}</li>)}</ul>
            </div>
            <div>
              <h2 className="font-[Nunito,sans-serif] text-[18px] font-bold leading-[22px]">Connect with us</h2>
              <div className="mt-[10px] flex items-start gap-[28px]">
                <svg width="32" height="32" viewBox="0 0 32 32"><path d="M2 0H30Q32 0 32 2V30Q32 32 30 32H22V20H26.300L27 15.200H22V12.300Q22 9.800 24.500 9.800H27.200V5.300Q25 5 23.200 5Q17 5 17 11.500V15.200H13V20H17V32H2Q0 32 0 30V2Q0 0 2 0Z" fill="#fff" /></svg>
                <svg width="33" height="33" viewBox="0 0 24 24" fill="#fff"><path d="M14.258 10.152L23.176 0h-2.113l-7.747 8.813L7.133 0H0l9.352 13.328L0 23.973h2.113l8.176-9.309 6.531 9.309h7.133zm-2.895 3.293l-.949-1.328L2.875 1.560h3.246l6.086 8.523.945 1.328 7.910 11.078h-3.246z" /></svg>
                <svg width="33" height="33" viewBox="0 0 33 33" fill="none" stroke="#fff" strokeWidth="3"><rect x="1.500" y="1.500" width="29.500" height="29.500" rx="8" /><circle cx="16.200" cy="16.200" r="6.800" /><circle cx="24.700" cy="8" r="2" fill="#fff" stroke="none" /></svg>
                <svg width="30" height="33" viewBox="0 0 30 33">
                  <path d="M15 0L29 11V32H1V11Z" fill="#fff" />
                  <path d="M1 13L15 25L29 13M1.500 31L11.500 22M28.500 31L18.500 22" stroke={NAVY} strokeWidth="1.300" fill="none" />
                  <text x="15" y="16" textAnchor="middle" fontFamily="Open Sans" fontSize="12" fontWeight="600" fill={NAVY}>@</text>
                </svg>
              </div>
            </div>
          </div>
          <ul className="mt-[42px] flex h-[21px]">
            <li>Copyright</li><li className="ml-[14px] mr-[20px]">|</li>
            <li>Disclaimer</li><li className="ml-[14px] mr-[20px]">|</li>
            <li>Privacy</li><li className="ml-[14px] mr-[20px]">|</li>
            <li>Right to information</li><li className="ml-[14px] mr-[20px]">|</li>
            <li>Site map</li>
          </ul>
          <p className="mt-[42px] text-[12px] leading-[18px]">© State of Queensland 2025 <span className="text-[#85868c]">v. 6.11.16350</span></p>
        </div>
      </footer>
    </>
  );
}

/* ---------- page ---------- */

export default function App() {
  return (
    <div className="min-h-[3505px] w-full bg-white font-['Open_Sans','Noto_Sans','Noto_Sans_CJK_SC',sans-serif] text-[14px] leading-[21px] text-[#333]">
      <Header />
      <main className="mx-auto w-[1140px]">
        <div className="mt-[15px] flex h-[80px] justify-between border-2 border-l-8 border-[#e31836] bg-[#f9e5e3] pl-[18px] pr-[19px] pt-[9px] text-[#333]">
          <div>
            <div className="text-[18px] leading-[27px]">January extended track closures - impacts all lines</div>
            <p className="mt-[5px]">View our <A>service notice</A> for more information.</p>
          </div>
          <svg className="mt-[11px]" width="10" height="10" viewBox="0 0 10 10" stroke="#666" strokeWidth="2.400"><path d="M1 1L9 9M9 1L1 9" /></svg>
        </div>

        <nav className="mt-5 flex h-[21px] whitespace-pre text-[#3a4160]">
          <span><A>Home</A></span><span className="mx-[14.5px]">/</span>
          <span><A>Service updates</A></span><span className="mx-[14.5px]">/</span>
          <span>Temporary route 237 removal - Morningside station reopening</span>
        </nav>

        <div className="mt-[19px] flex h-[77px] items-end justify-between">
          <h1 className={`${HEAD} w-[860px] text-[35px] leading-[38.5px]`}>Temporary route 237 removal - Morningside station reopening</h1>
          <button className="mb-[5px] flex h-[34px] w-[72px] items-center justify-center gap-[5px] rounded-[2px] border border-[#252b4b] text-[11px] font-bold text-[#252b4b]">
            Print <FaPrint className="text-[14px]" />
          </button>
        </div>

        <p className="mt-[30px] text-[12px] leading-[18px] text-[#666]"><strong className="font-bold">Last reviewed:</strong> Thursday 19 Dec 2024 at 11.56am</p>

        <div className="mt-[15px] space-y-[19px]">
          <p>On <B>Tuesday 31 December</B> Morningside station will reopen following a <A>major accessibility upgrade</A>.</p>
          <p>During the station upgrade <B>temporary railbus route 237</B> has replaced train services between Morningside and Cannon Hill stations.</p>
          <p>Route 237 will be removed after the last scheduled service <B>on Sunday 22 December</B>.</p>
          <p>Please <A>re-plan your travel for Monday 23 December</A>.</p>
        </div>
        <h2 className={`${HEAD} mt-[18px] text-[22.4px] leading-[27px]`}>Railbus R581 alternative (23-31 Dec)</h2>
        <p className="mt-[19px]">From <B>Monday 23 December until Tuesday 31 December</B> a different <B>railbus <A>R581</A></B> will replace travel between Morningside and Cannon Hill stations.</p>
        <p className="mt-[19px]">This railbus is running during the following <A>holiday period track closures</A>:</p>
        <ul className="mt-5 list-disc pl-10">
          <li><A>Saturday 21 and Sunday 22 December</A> - all lines affected</li>
          <li><A>Monday 23 and Tuesday 24 December</A> - all lines affected</li>
          <li><A>Wednesday 25 and Thursday 26 December</A> - all lines affected</li>
          <li><A>Friday 27 December</A> - all lines affected</li>
          <li><A>Saturday 28 and Sunday 29 December</A> - all lines affected</li>
          <li><A>Monday 30 December</A> - Cleveland and Doomben lines affected</li>
        </ul>
        <p className="mt-4">Departure stops will be different, so please check below to see where to catch R581 from.</p>
        <p className="mt-[19px]"><B>From Tuesday 31 December onwards</B>, you will be able to catch the train from Morningside station.</p>

        <StopChanges title="Morningside station railbus stop changes"><MorningsideMap /></StopChanges>
        <StopChanges title="Cannon Hill station railbus stop changes" dashed><CannonHillMap /></StopChanges>

        <h2 className={`${HEAD} mt-[16px] text-[22.4px] leading-[27px]`}>Morningside station upgrade</h2>
        <p className="mt-[20px]">Your <A>new station</A> will have upgraded platforms, a new footbridge and lifts; plus all new station office and ticketing facilities.</p>
        <h2 className={`${HEAD} mt-[18px] text-[22.4px] leading-[27px]`}>Affected services</h2>
        <h3 className={`${HEAD} mt-[28px] text-[19.9px] leading-6`}>South East Queensland</h3>
        <h4 className={`${HEAD} mt-[18px] text-[16.8px] leading-5`}>Bus</h4>
        <div className="mt-[12px] flex items-center gap-[5px]"><AlertIcon />237</div>
        <div className="mt-[5px] flex items-center gap-[5px]"><InfoIcon />R581</div>
        <h2 className={`${HEAD} mt-[27px] text-[22.4px] leading-[27px]`}>Affected stops &amp; stations</h2>
        <h4 className={`${HEAD} mt-[20px] text-[16.8px] leading-5`}>Station</h4>
        <ul className="mt-[10px]">
          <li className="flex h-[21px] items-start gap-1"><InfoIcon /><span><A>Morningside station</A></span></li>
          <li className="flex h-[21px] items-start gap-1"><InfoIcon /><span><A>Cannon Hill station</A></span></li>
        </ul>

        <h2 className={`${HEAD} mt-[48px] text-[24.5px] leading-[29px]`}>Was this page helpful?</h2>
        <div className="mt-[11px] flex h-[23px] items-start">
          <span className="mt-px h-[19px] w-[19px] rounded-full border-2 border-[#757575]" />
          <span className="ml-3 mt-[2px] w-[32px]">Yes</span>
          <span className="mt-px h-[19px] w-[19px] rounded-full border-2 border-[#757575]" />
          <span className="ml-3 mt-[2px]">No</span>
        </div>
        <button className="mt-[29px] block h-10 w-[132px] rounded-[2px] border border-[#252b4b] font-bold text-[#252b4b]">Send feedback</button>
      </main>
      <Footer />
    </div>
  );
}
